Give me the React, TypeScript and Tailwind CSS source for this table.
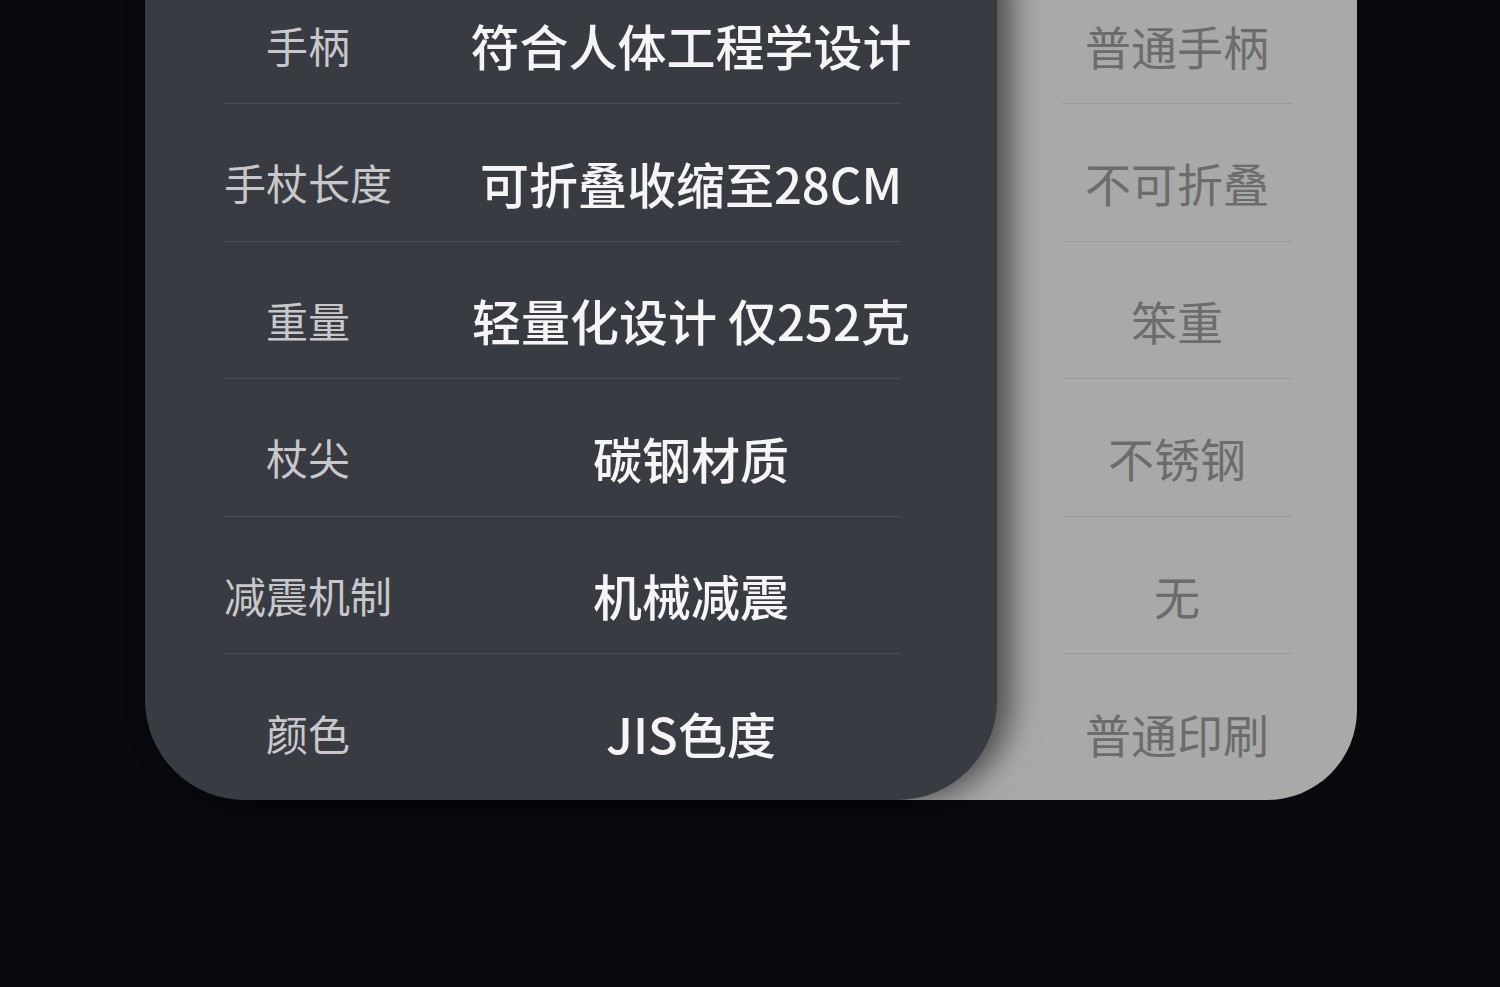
const rows = [
  { label: '手柄', ours: '符合人体工程学设计', theirs: '普通手柄' },
  { label: '手杖长度', ours: '可折叠收缩至28CM', theirs: '不可折叠' },
  { label: '重量', ours: '轻量化设计 仅252克', theirs: '笨重' },
  { label: '杖尖', ours: '碳钢材质', theirs: '不锈钢' },
  { label: '减震机制', ours: '机械减震', theirs: '无' },
  { label: '颜色', ours: 'JIS色度', theirs: '普通印刷' },
];

const font = { fontFamily: '"Noto Sans CJK SC", "Noto Sans", sans-serif' };

export default function App() {
  return (
    <div className="w-full h-[987px] bg-[#08080d] overflow-hidden" style={font}>
      <div className="flex pl-[145px] -mt-[33.5px]">
        {/* our product */}
        <div className="relative z-10 shrink-0 w-[852px] bg-[#393b42] rounded-bl-[100px] rounded-br-[100px] pl-[79px] pr-[97px] shadow-[14px_0_30px_rgba(0,0,0,0.55)]">
          {rows.map((r, i) => {
            const last = i === rows.length - 1;
            return (
              <div
                key={r.label}
                className={`flex items-center pt-[20px] ${last ? 'h-[146px] pb-[9px]' : 'h-[137.5px] border-b border-[#4c4e55]'}`}
              >
                <div className="shrink-0 w-[168px] text-center text-[42px] leading-none text-[#c8c8ca] whitespace-nowrap">
                  {r.label}
                </div>
                <div className="ml-[90px] flex-1 min-w-0 flex justify-center">
                  <span className="text-[49px] leading-none font-medium text-[#f5f5f5] whitespace-nowrap">{r.ours}</span>
                </div>
              </div>
            );
          })}
        </div>
        {/* ordinary product */}
        <div className="-ml-[200px] shrink-0 w-[560px] pl-[200px] bg-[#a9a9a9] rounded-br-[90px]">
          {rows.map((r, i) => {
            const last = i === rows.length - 1;
            return (
              <div key={r.theirs} className={`flex flex-col ${last ? 'h-[146px]' : 'h-[137.5px]'}`}>
                <div className={`flex-1 flex items-center justify-center pt-[20px] ${last ? 'pb-[9px]' : ''}`}>
                  <span className="text-[46px] leading-none text-[#6c6c6c] whitespace-nowrap">{r.theirs}</span>
                </div>
                {!last && <div className="mx-auto w-[230px] h-px bg-[#999999]" />}
              </div>
            );
          })}
        </div>
      </div>
    </div>
  );
}
